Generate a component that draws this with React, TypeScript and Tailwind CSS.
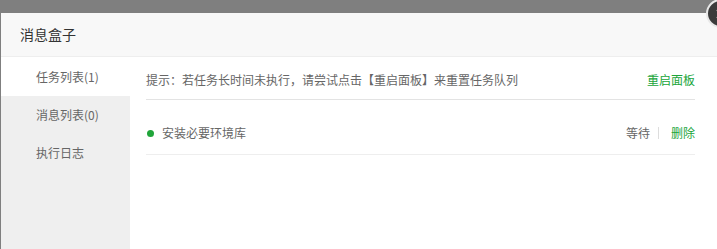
import { X } from "lucide-react";

const MENU = ["任务列表(1)", "消息列表(0)", "执行日志"];

export default function App() {
  return (
    <div
      className="relative w-[717px] h-[249px] overflow-hidden bg-[#7f7f7f] pt-[13px] pl-px"
      style={{ fontFamily: '"Noto Sans CJK SC", "Noto Sans", sans-serif' }}
    >
      <div className="flex flex-col w-[730px] h-[260px] bg-white rounded-tl-[2px]">
        {/* Header */}
        <div className="h-[44px] shrink-0 flex items-center px-[19px] pb-px bg-[#f8f8f8] border-b border-[#eeeeee] text-[14px] text-[#333]">
          消息盒子
        </div>

        <div className="flex flex-1">
          {/* Sidebar */}
          <div className="w-[129px] shrink-0 bg-[#efefef]">
            {MENU.map((m, i) => (
              <div
                key={m}
                className={
                  i === 0
                    ? "h-[39px] flex items-center pl-[35px] text-[12px] text-[#666] bg-white"
                    : "h-[38px] flex items-center pl-[35px] text-[12px] text-[#666]"
                }
              >
                {m}
              </div>
            ))}
          </div>

          {/* Main */}
          <div className="w-[565px] pl-4 shrink-0">
            <div className="flex items-center justify-between pt-[14px] pb-[10px] leading-[18px] text-[12px] border-b border-[#e3e3e3]">
              <span className="text-[#666]">提示：若任务长时间未执行，请尝试点击【重启面板】来重置任务队列</span>
              <span className="text-[#20a53a]">重启面板</span>
            </div>
            <div className="flex items-center justify-between pt-[24px] pb-[12px] leading-[18px] text-[12px] border-b border-[#eeeeee]">
              <div className="flex items-center gap-[8px]">
                <span className="w-[7px] h-[7px] rounded-full bg-[#20a53a] ml-px" />
                <span className="text-[#666]">安装必要环境库</span>
              </div>
              <div className="flex items-center text-[12px]">
                <span className="text-[#666]">等待</span>
                <span className="ml-[8px] mr-[12px] w-px h-[12px] bg-[#ddd]" />
                <span className="text-[#20a53a]">删除</span>
              </div>
            </div>
          </div>
        </div>
      </div>

      {/* close button */}
      <div className="absolute left-[706px] top-[-1px] w-[29px] h-[29px] rounded-full bg-[#3b3b3b] border-2 border-[#e8e8e8] flex items-center justify-center">
        <X size={14} strokeWidth={3} className="text-white" />
      </div>
    </div>
  );
}
